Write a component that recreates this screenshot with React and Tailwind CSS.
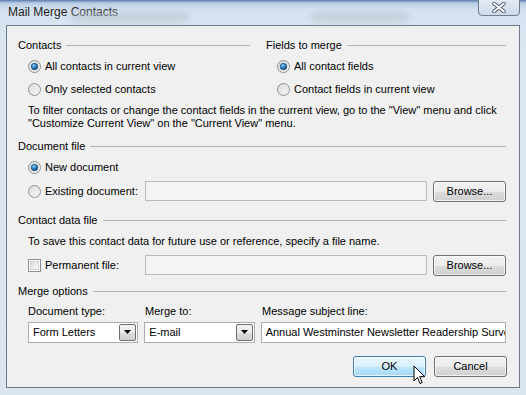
import React from "react";

const font = { fontFamily: '"Liberation Sans", Arial, sans-serif' };

const Radio = ({ checked }) => (
  <svg width="13" height="13" viewBox="0 0 13 13" className="shrink-0">
    <defs>
      <linearGradient id="rb" x1="0" y1="0" x2="1" y2="1">
        <stop offset="0" stopColor="#d4d4d4" />
        <stop offset="1" stopColor="#ffffff" />
      </linearGradient>
      <radialGradient id="rd" cx="0.4" cy="0.35" r="0.7">
        <stop offset="0" stopColor="#9fd3f5" />
        <stop offset="0.45" stopColor="#2a85c9" />
        <stop offset="1" stopColor="#0e3a68" />
      </radialGradient>
    </defs>
    <circle cx="6.5" cy="6.5" r="6" fill="url(#rb)" stroke="#8e8f8f" strokeWidth="1" />
    <circle cx="6.5" cy="6.5" r="4.5" fill="none" stroke="#e6e6e6" strokeWidth="1" />
    {checked && <circle cx="6.5" cy="6.5" r="3.3" fill="url(#rd)" stroke="#1b4a78" strokeWidth="0.6" />}
  </svg>
);

const Check = () => (
  <div className="w-[13px] h-[13px] shrink-0 border border-[#8e8f8f] bg-white p-[1px]">
    <div className="w-full h-full border border-[#cfd0d0] bg-gradient-to-br from-[#dcdcdc] to-[#fafafa]" />
  </div>
);

const Header = ({ label, className = "" }) => (
  <div className={`flex items-center h-[20px] ${className}`}>
    <span>{label}</span>
    <div className="ml-[5px] flex-1 h-px bg-[#b3b3b3]" />
  </div>
);

const WinButton = ({ label, hover }) => (
  <div
    className={`w-[73px] h-[21px] rounded-[3px] border flex items-center justify-center shrink-0 ${
      hover
        ? "border-[#3c7fb1] bg-[linear-gradient(#eaf6fd_0%,#d9f0fc_50%,#bee6fd_51%,#a7d9f5_100%)]"
        : "border-[#707070] bg-[linear-gradient(#f2f2f2_0%,#ebebeb_50%,#dddddd_51%,#cfcfcf_100%)]"
    } shadow-[inset_0_0_0_1px_rgba(255,255,255,0.7)]`}
  >
    {label}
  </div>
);

const Combo = ({ value, w }) => (
  <div className={`${w} h-[21px] border border-[#abadb3] bg-white flex items-center pl-[4px] pr-[1px]`}>
    <span className="flex-1">{value}</span>
    <div className="w-[17px] h-[17px] border border-[#707070] rounded-[2px] bg-[linear-gradient(#f2f2f2_0%,#ebebeb_50%,#dddddd_51%,#cfcfcf_100%)] flex items-center justify-center">
      <svg width="7" height="4" viewBox="0 0 7 4">
        <path d="M0 0h7L3.5 4z" fill="#000" />
      </svg>
    </div>
  </div>
);

const FileBox = () => (
  <div className="w-[283px] h-[20px] border border-[#b5bac3] bg-[#f4f4f4]" />
);

export default function App() {
  return (
    <div
      className="relative w-[526px] h-[395px] overflow-hidden bg-[linear-gradient(#5b7cae_0px,#b8cbe4_3px,#d6e2f0_10px,#dde7f3_60px,#dbe5f1_100%)] text-[11px] text-black"
      style={font}
    >
      {/* title bar */}
      <div className="relative h-[25px] flex items-center pl-[8px]">
        <span className="text-[12px] text-[#1e1e1e] pb-[2px]">Mail Merge Contacts</span>
        <div className="absolute left-[70px] top-[12px] w-[120px] h-[10px] rounded-full bg-[#b9c3cf] blur-[3px] opacity-60" />
        <div className="absolute left-[310px] top-[12px] w-[100px] h-[10px] rounded-full bg-[#b9c3cf] blur-[3px] opacity-60" />
        <div className="absolute left-[478px] top-[-2px] w-[42px] h-[18px] rounded-b-[4px] border border-[#6f7c8f] bg-[linear-gradient(#e3ebf5,#cfdaea)] flex items-center justify-center">
          <svg width="14" height="11" viewBox="0 0 14 11">
            <path d="M2 1.5l10 8M12 1.5l-10 8" stroke="#4a5468" strokeWidth="3.6" strokeLinecap="round" />
            <path d="M2 1.5l10 8M12 1.5l-10 8" stroke="#ffffff" strokeWidth="2" strokeLinecap="round" />
          </svg>
        </div>
      </div>

      {/* client area */}
      <div className="ml-[6px] w-[514px] h-[363px] border border-[#6d7888] bg-[#f0f0f0] pl-[11px] pr-[13px] pt-[9px]">
        <div className="flex">
          <div className="w-[248px] pr-[16px]">
            <Header label="Contacts" />
            <div className="h-[22px] flex items-center pl-[10px] gap-[4px]">
              <Radio checked />
              <span>All contacts in current view</span>
            </div>
            <div className="h-[24px] flex items-center pl-[10px] gap-[4px]">
              <Radio />
              <span>Only selected contacts</span>
            </div>
          </div>
          <div className="flex-1">
            <Header label="Fields to merge" />
            <div className="h-[22px] flex items-center pl-[11px] gap-[4px]">
              <Radio checked />
              <span>All contact fields</span>
            </div>
            <div className="h-[24px] flex items-center pl-[11px] gap-[4px]">
              <Radio />
              <span>Contact fields in current view</span>
            </div>
          </div>
        </div>

        <p className="mt-[3px] pl-[10px] leading-[13px]">
          To filter contacts or change the contact fields in the current view, go to the "View" menu and click
          <br />
          "Customize Current View" on the "Current View" menu.
        </p>

        <Header label="Document file" className="mt-[6px]" />
        <div className="h-[22px] flex items-center pl-[10px] gap-[4px]">
          <Radio checked />
          <span>New document</span>
        </div>
        <div className="h-[26px] flex items-center">
          <div className="w-[127px] flex items-center pl-[10px] gap-[4px]">
            <Radio />
            <span>Existing document:</span>
          </div>
          <FileBox />
          <div className="ml-[6px]">
            <WinButton label="Browse..." />
          </div>
        </div>

        <Header label="Contact data file" className="mt-[6px]" />
        <div className="h-[22px] flex items-center pl-[10px]">
          To save this contact data for future use or reference, specify a file name.
        </div>
        <div className="h-[26px] flex items-center">
          <div className="w-[127px] flex items-center pl-[10px] gap-[4px]">
            <Check />
            <span>Permanent file:</span>
          </div>
          <FileBox />
          <div className="ml-[6px]">
            <WinButton label="Browse..." />
          </div>
        </div>

        <Header label="Merge options" className="mt-[3px]" />
        <div className="h-[20px] flex items-center pl-[10px]">
          <span className="w-[117px]">Document type:</span>
          <span className="w-[117px]">Merge to:</span>
          <span>Message subject line:</span>
        </div>
        <div className="h-[22px] flex items-center pl-[10px] gap-[6px]">
          <Combo value="Form Letters" w="w-[111px]" />
          <Combo value="E-mail" w="w-[111px]" />
          <div className="w-[247px] h-[21px] border border-[#abadb3] bg-white flex items-center pl-[4px] overflow-hidden whitespace-nowrap">
            Annual Westminster Newsletter Readership Survey
          </div>
        </div>

        <div className="mt-[12px] h-[22px] flex items-center pl-[335px] gap-[8px]">
          <div className="relative">
            <WinButton label="OK" hover />
            <svg className="absolute left-[60px] top-[9px]" width="13" height="20" viewBox="0 0 13 20">
              <path
                d="M1 1v15l3.5-3.5 2.5 6 2.2-1-2.5-5.8h5z"
                fill="#fff"
                stroke="#000"
                strokeWidth="1"
                strokeLinejoin="round"
              />
            </svg>
          </div>
          <WinButton label="Cancel" />
        </div>
      </div>
    </div>
  );
}
